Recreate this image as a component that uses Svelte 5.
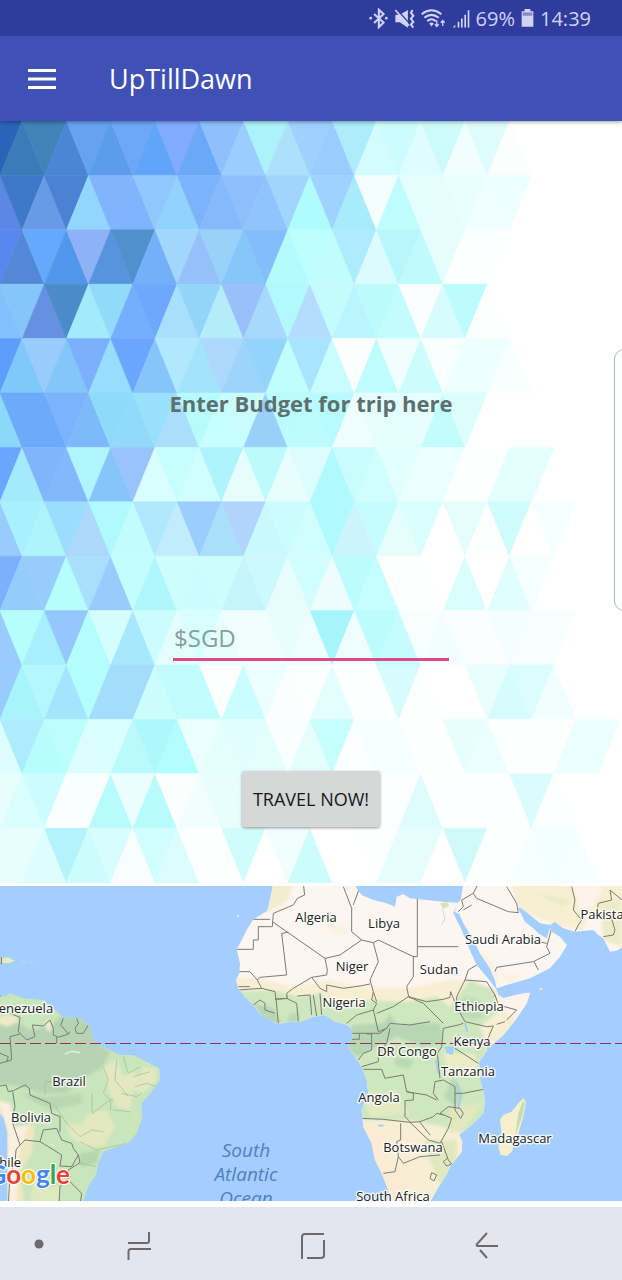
<script>
  let budget = $state('');

  // Triangle mosaic: each row lists fills from left to right, one per half base.
  const HALF = 22.15;
  const ROW = 54.4;
  const mosaic = [
    '2a64b8 3a7cba 3f83b8 4a86d4 66a2f0 5c9cec 6ea6f8 62a4f9 82aafd 6aa8f8 8ec0fd 9acefd acf2fc ace0fb 9fd0fe 98cdfd acecfb d2fcfe ccfcfe dffdfe cdfbfc f0fefe dffcfd fcfefe',
    '5a88e2 3f78c8 689be6 4b82d6 92d6fe 82b4fc 80b4fd 90c8fb 92d2fe 7cb4fb 86b8fc 8ebefc 90c4fc a0d6fc aefcfe 9fd2ff a8ecfc f4fefe bffcfe e4fdfe e6fdfe e9fefe f0ffff edffff',
    '5688f0 5288d6 66a8fc 5298ea 8eb2f6 5894de 5090cc 74b0fa a2d6fb 96c0fa 98d2fb 86c6fa 84befa b4fbfd bdfefe c2fdfe acecfc dcfbfc b8f6fc bffafc e6fdfe fdfefe fbffff',
    '82c0fc 84c6fc 6890e2 4a8cca a2eafc 92dafa 74aefc 6ea8fc a8e0fb 94d4f8 b4ecfb 98c0fa a8d8fc b2f8fd b4dcfc c6fbfe baf4fc bcfbfd c4fbfd fafefe d6fcfd bdfcfd fdffff',
    '5e9efa 80c8fb 98ccfc 84c6fa 7ab0fc 96defb 6aa6fb 86c4fb b0e8fd a4e4fb acd8fb 9cd4fc 94d4fc c0fdfd a8e4fc c9fdfd fcfefe bffcfe f0fefe cbfdfd f7ffff edffff edffff f8ffff',
    '8cd8fb 6caafa 6caafb 7cb4fb 7ebafb 8edafb 92dafc 98e0fb aadefa b8fbfd c8fdfd cafcfe 98d0fa bcfbfd bdfcfe b8fbfe effefe e6fdfe e4fdfe e6fefe c2fcfd ddfdfd',
    '6aa6fb a2eafc 80b4fb 82b8fc b0f4fc 88c4fc 98c4fb d8feff c6fdfe d0fefe aff4fc e6fdfe bdfafd e8fdfe dcfdfe b0fafe c8fcfd d0fdfe e2fefe ecffff ebffff fdffff fdffff e4fdfd e4fdfe',
    '98ccfc a8f0fd aef4fd 9cdcfc acd8fc aefafe c2fdfe b0e8fc c2ecfc 9acefc a8e0fc b0d4fc c8fafd ccfdfe d2fdfe aefafe ccf4fd c6fcfe e6fdfe dafdfd ffffff e6fdfd fdffff d0fcfd ffffff f6ffff',
    '7cb0fc 94ccfc 98ccfc b6fdfe a8e0fc 98ccfc c4fdfe b0f6fd ccfefe ccfdfe ccfefe c6f4fd ccf8fe e6fdfe d2fdfe edfdfe bdfcfe c6fdfe fdffff fdffff ffffff dafdfd ffffff e2fdfd f5ffff',
    '98ccfc b8fdfe a6f0fd 94c8fc b4fcfe d4fefe a8e8fd ccfdfe e4fefe d8fefe e8fefe f0fefe f0fefe e8fefe eefefe a8f4fc eefefe bcfcfe c6fcfe f8ffff f2fefe fafefe fafefe f4fefe f6fefe f8ffff',
    '98ccfe a8f4fd b4f8fe a4e4fc b4fdfe a4dcfd a4dcfc ccfdfd c2fbfe c2fdfe fdfefe cafdfe ecfefe fafefe fdfefe e4fdfe fdffff fcffff d6fcfd fdffff ffffff ffffff eafefe d6fdfd dcfdfd f0fefe',
    'dcfdfe acecfd b8fdfe bcfdfe dcfdfe d8fefe bafafc aef8fc b2fdfd ecfefe e4fefe e0fefe e4fefe f8ffff e4fdfd c8fdfd fcffff f6ffff f6ffff fdffff fdffff e8fefe ecfefe fdffff fdffff fdffff ecfefe ecfefe',
    'e8fefe dafdfe ccfcfe fafefe f8fefe b8fbfc ecfdfe b8fbfc fcfefe f0fefe e8fefe e8fefe e8fefe f0fefe f0fefe fafefe fcffff fcffff fcffff dffcfd fcffff fcffff fcffff fcffff dcfbfc fcffff',
    'e8fefe e6fefe dcfefe b4f2fc ccfdfd d8fdfd f8fefe d0fdfd dcfdfe fdffff fdffff d0fcfc ffffff f0fefe ccfcfc ffffff ffffff fdffff e6fdfd e6fdfd ffffff d0fafa fdffff fdffff f6ffff f2ffff f4ffff',
  ];
  const tiles = mosaic.flatMap((row, r) =>
    row.split(' ').map((c, i) => {
      const top = r * ROW;
      const bottom = top + ROW;
      const down = (i + r) % 2 === 0;
      const base = down ? top : bottom;
      const tip = down ? bottom : top;
      return {
        points: `${(i - 1) * HALF},${base} ${(i + 1) * HALF},${base} ${i * HALF},${tip}`,
        fill: '#' + c,
      };
    })
  );

  const places = [
    ['Algeria', 316, 36], ['Libya', 384, 42], ['Niger', 352, 85], ['Nigeria', 344, 121],
    ['Sudan', 439, 88], ['Ethiopia', 479, 125], ['Kenya', 472, 160], ['DR Congo', 407, 170],
    ['Tanzania', 468, 190], ['Angola', 379, 216], ['Botswana', 413, 266], ['Madagascar', 515, 257],
    ['South Africa', 393, 315], ['Saudi Arabia', 503, 58], ['Pakistan', 606, 33],
    ['Venezuela', 22, 127], ['Brazil', 69, 200], ['Bolivia', 31, 236], ['Chile', 6, 281],
  ];
  const ocean = [['South', 271], ['Atlantic', 295], ['Ocean', 319]];

  const africa = 'M190 10L180 60 172 92 130 118 110 150 95 180 80 208 90 250 88 280 78 300 85 325 105 350 130 375 150 402 180 420 205 432 240 425 270 425 310 410 345 405 375 425 405 432 425 445 428 470 413 500 435 530 455 560 470 600 475 640 455 690 460 740 485 790 495 840 515 880 535 930 540 975H655L680 930 712 880 720 860 755 815 757 785 747 765 785 735 820 700 824 670 822 640 810 600 812 570 805 550 835 505 880 465 920 415 950 370 960 338 930 342 880 355 865 345 858 327 830 290 800 255 775 200 755 150 730 100 742 68 700 65 650 60 600 55 580 42 560 50 555 80 530 70 490 60 455 45 440 25 430 10Z';
  const asia = 'M735 96L748 102 760 130 790 180 810 220 840 265 855 300 860 325 900 312 960 295 1020 265 1050 230 1071 195 1050 170 1025 155 1020 145 1010 175 985 160 970 145 945 125 930 95 922 82 935 85 960 105 990 130 1020 135 1035 125 1060 145 1095 155 1150 150 1165 165 1180 175 1200 215 1220 212 1240 200V10H760L752 60 738 72Z';
  const america = 'M-10 345L15 350 30 340 70 355 130 360 160 385 190 412 240 415 270 440 280 480 300 495 340 515 360 525 400 525 440 545 478 565 480 600 455 635 425 670 425 720 410 760 385 790 350 800 310 815 295 850 290 880 265 920 245 975H22V760L10 712-10 695Z';
</script>

<div class="screen">
  <header>
    <div class="status">
      <svg width="19" height="21" viewBox="33 22 56 62" aria-hidden="true">
        <path d="M48 40L76 65 62 79V27L76 40 48 66" fill="none" stroke="currentColor" stroke-width="6" />
        <circle cx="38" cy="52" r="4" fill="currentColor" /><circle cx="84" cy="52" r="4" fill="currentColor" />
      </svg>
      <svg width="21" height="21" viewBox="103 22 62 62" aria-hidden="true">
        <path d="M107 42H120L144 28V80L120 64H107Z" fill="currentColor" />
        <path d="M112 27L150 69" stroke="#2f3b9d" stroke-width="4" />
        <path d="M107 28L147 74" stroke="currentColor" stroke-width="5" />
        <path d="M158 28L153 36 160 45 153 54 160 63 153 71 160 80" fill="none" stroke="currentColor" stroke-width="6" />
      </svg>
      <svg width="25" height="21" viewBox="187 22 76 62" aria-hidden="true">
        <g fill="none" stroke="currentColor" stroke-width="6">
          <path d="M189 40Q219 16 249 40M197 51Q219 33 241 51M206 61Q219 50 232 61" />
          <path d="M235 58V76M229 70L235 77 241 70M253 76V60M247 66L253 59 259 66" stroke-width="4" />
        </g>
        <path d="M212 68Q219 62 226 68L219 77Z" fill="currentColor" />
      </svg>
      <svg width="18" height="21" viewBox="272 22 54 62" aria-hidden="true">
        <path d="M274 80L282 72V80ZM289 63H294V80H289ZM299 53H304V80H299ZM309 42H314V80H309ZM319 28H324V80H319Z" fill="currentColor" />
      </svg>
      <span>69%</span>
      <svg width="13" height="20" viewBox="482 24 40 60" aria-hidden="true">
        <path d="M493 26H511V33H520V81H484V33H493Z" fill="currentColor" />
        <path d="M487 37H517V47H487Z" fill="#8588c8" />
      </svg>
      <time>14:39</time>
    </div>
    <div class="toolbar">
      <button class="menu" aria-label="Open navigation">
        <svg width="28" height="20" viewBox="0 0 28 20" aria-hidden="true">
          <path d="M0 1.5H28M0 10H28M0 18.5H28" stroke="#fff" stroke-width="3" />
        </svg>
      </button>
      <h1>UpTillDawn</h1>
    </div>
  </header>

  <main>
    <svg class="mosaic" viewBox="0 0 622 765" preserveAspectRatio="xMidYMid slice" aria-hidden="true">
      {#each tiles as t}
        <polygon points={t.points} fill={t.fill} stroke={t.fill} stroke-width="0.6" />
      {/each}
    </svg>
    <label for="budget">Enter Budget for trip here</label>
    <input id="budget" type="text" inputmode="decimal" placeholder="$SGD" bind:value={budget} />
    <button class="travel">TRAVEL NOW!</button>
    <div class="edge"></div>
  </main>

  <section class="map" aria-label="Map">
    <svg viewBox="0 0 622 315" preserveAspectRatio="xMidYMid slice">
      <defs>
        <clipPath id="af"><path d={africa} /></clipPath>
        <clipPath id="as"><path d={asia} /></clipPath>
        <clipPath id="am"><path d={america} /></clipPath>
        <filter id="soft"><feGaussianBlur stdDeviation="5" /></filter>
      </defs>
      <rect width="622" height="315" fill="#a3ceff" />

      <g transform="translate(0 -6) scale(.33333)">
        <path d="M-5 235L25 232 45 243 25 250-5 248Z" fill="#e3ebc2" />
        <path d="M4 232V252" stroke="#666" stroke-width="3" />
        <path d="M65 245L80 248M92 248H97M113 252H118" stroke="#c7dbc9" stroke-width="4" />
        <path d={america} fill="#c9e5bb" />
        <g clip-path="url(#am)">
          <g filter="url(#soft)">
            <path d="M-10 430L50 425 90 450 150 440 190 400 240 415 275 440 300 495 330 515 310 560 260 590 200 640 130 640 60 620-10 610Z" fill="#b7d4b2" />
            <path d="M60 640L150 650 240 640 250 670 160 690 90 660Z" fill="#b9d8b2" />
            <path d="M0 410L45 405 55 425 20 440-5 430ZM135 420L155 425 155 455 140 450Z" fill="#efebc8" />
            <path d="M-10 660L30 670 45 740 90 735 100 790 70 830 55 980H20L22 750Z" fill="#fbefe0" />
            <path d="M85 730L105 740 95 820 60 880 75 980H50L50 850Z" fill="#eee8c2" />
            <path d="M200 730L240 735 270 700 320 690 345 740 310 800 260 800 210 770Z" fill="#e4e8be" />
            <path d="M310 560L350 540 370 590 410 560 470 565 470 600 430 640 400 630 390 690 350 680 330 640Z" fill="#e3e8c0" />
            <path d="M390 540L430 560 420 590 395 575ZM400 690L420 690 405 760 385 760Z" fill="#cde6b9" />
            <path d="M240 820L300 810 290 850 240 860Z" fill="#b4d7ad" />
            <path d="M100 900L180 920 175 970 90 970Z" fill="#dfe9bd" />
          </g>
          <path d="M195 522L215 514 240 518M150 790L165 800" stroke="#d9eee4" stroke-width="5" fill="none" />
          <path class="states" d="M135 645V605H160M310 560L325 600 310 640 332 660V690M275 640L277 700 330 660H340M350 540L345 600 385 650M370 530L385 580 420 560M405 620L440 610 470 620M340 690L390 695M160 670L200 730 240 770 275 750 310 755M240 785L290 810 380 790M240 850L290 860M400 590L450 575M365 640L410 650 425 640" />
          <path class="border" d="M0 350L15 338M30 400L60 412 55 455 80 480 105 470 97 435 130 438 150 420 160 445 160 465 175 472 205 462 210 455M190 415L182 435 205 462M230 415L235 430 225 445 230 460H250L265 435M60 462L30 470 35 540 0 550M170 472V490M0 520L25 530 20 545M0 618L18 615 25 635 40 632 75 615 88 625 90 645 150 670 155 700 180 710 180 755M38 635L45 680 35 720 60 795 75 780 120 785 130 750 170 745 185 780 215 790 220 805 235 825 215 860 180 858 185 825 145 800 120 785M60 795L48 810 45 850 30 880 25 975M235 825L240 848 205 870 210 890 180 920 177 975M210 905L245 940 240 975" />
        </g>
      </g>

      <g transform="translate(210 -6) scale(.33333)">
        <path d={africa} fill="#fdf5f0" />
        <path d={asia} fill="#fdf5f0" />
        <g clip-path="url(#af)">
          <g filter="url(#soft)">
            <path d="M190 10H250L235 60 190 90 165 95Z" fill="#f3edcf" />
            <path d="M50 290L140 295 250 320 350 300 450 320 590 325 720 300 770 300 870 330 990 330V460L820 560V1000H400V690L50 400Z" fill="#f8eed4" />
            <path d="M70 335L190 330 270 350 330 340 400 385 470 360 590 365 680 350 720 380 780 300 850 330 860 400 810 440 830 500 830 720 760 760 700 740 600 720 450 720 400 500 50 460Z" fill="#cee7bf" />
            <path d="M130 370L190 385 215 430 170 430ZM425 435L520 430 540 400 560 435 620 430 690 430 700 490 640 500 560 470 440 530 410 500Z" fill="#b7d6b2" />
            <path d="M550 530L610 540 600 565 560 560ZM240 400L270 400 260 430 230 430ZM730 590L760 640 740 680 700 650Z" fill="#b9d9b3" />
            <path d="M760 350L810 360 820 410 790 420 740 400Z" fill="#bbdcb4" />
            <path d="M700 520L790 520 810 570 720 590Z" fill="#eeecc6" />
            <path d="M460 640L560 640 600 700 480 710Z" fill="#e5e9c1" />
            <path d="M865 350L970 330 930 420 890 400Z" fill="#fdf3ec" />
            <path d="M450 730L530 760 550 880 600 870 610 930 560 980 460 940Z" fill="#fbebd4" />
            <path d="M720 680L820 670 760 750 720 760ZM640 780L740 780 740 880 690 920 660 840Z" fill="#e2e8be" />
            <path d="M345 140L390 135 420 150 390 165Z" fill="#f9f2e0" />
          </g>
          <path d="M690 70L710 66 718 78 700 86Z" fill="#d5e4b4" />
          <path d="M740 610L752 650 745 685M678 540L685 580M765 430L772 455M505 737H520" stroke="#9ccafb" stroke-width="5" fill="none" />
          <path d="M697 85L705 115 695 135" stroke="#bcdcf8" stroke-width="3" fill="none" />
          <path d="M705 500H732L728 525 710 520Z" fill="#a3ceff" />
          <path class="border" d="M280 10L284 45 262 55 250 75 190 100 187 140H145V180H130V208H80M187 125L345 235 390 225 455 180 425 155V85L400 20M130 118H180M235 157L215 160 230 285 150 292 142 300M345 235L352 270 350 285 305 292 330 325M305 292L250 325 230 340 232 355 195 358M455 180L490 188 505 180 610 230V290L590 320 595 345 600 355M622 55V230H610M622 200H745M450 20L430 75M490 188L505 245 480 300 490 335 485 360M330 325L350 335V315L400 325 450 318 480 312M85 275L120 275 142 300 155 325 195 335 200 375 205 430M85 320H120M85 330L155 325M130 375L150 360 165 370 165 390 195 400M195 358L230 355 260 370 265 425M262 348L300 345 305 405M310 345L320 408M330 340L335 405M485 360L500 370 490 390 440 405 410 430M490 335L500 365M490 390L505 455 530 445 540 430 600 435 660 425M500 400L550 380 595 350 640 370 700 430M595 350L650 365 700 358 720 352 722 335 728 350 740 380 765 425M425 460H510L530 445M425 478H448V462M470 462H485V510L460 520 445 540M540 445L530 490 505 520 505 545 455 560M460 568H515L525 595 580 585 590 635 610 640V660L585 662V710L600 725M455 715L520 718 600 727 630 725 670 710 680 700 700 705M590 635L650 645 680 660M600 727L655 780 690 790M572 730V780L560 785 565 830 555 875 520 880M565 830L580 850 630 830 690 825M630 727L660 765M690 790L715 745 725 715 690 700 715 680 750 685 760 700 752 715 735 690 735 620 700 600 675 605 670 640 685 660M690 595L682 520 695 500 700 445 745 435 760 430M735 640H760L820 628M735 505L805 550M765 425L830 440 850 438 832 480 835 510M740 380L740 350 765 300 775 270 800 255M765 300L830 305 855 345 850 350M855 345L865 375 920 390 890 420M885 425L860 433M695 785L715 840 725 852 710 858 700 845 712 835M660 895L665 878 680 885 672 903Z" />
        </g>
        <g clip-path="url(#as)">
          <g filter="url(#soft)">
            <path d="M900 10H1236V80L1200 100 1130 110 1120 150 1060 140 1000 120 930 90Z" fill="#f6efd2" />
            <path d="M1090 20H1180L1150 80 1110 100Z" fill="#fdf3ea" />
            <path d="M1170 60H1236V200L1180 180Z" fill="#eeecc8" />
            <path d="M780 180L850 250 870 320 820 260ZM870 280L940 290 900 312Z" fill="#fbf1df" />
            <path d="M980 40L1080 60 1060 80Z" fill="#e9eac6" />
          </g>
          <path class="border" d="M755 60L790 40 805 10M790 40L800 55 895 95 925 98 920 70 890 20M745 95L760 80 755 60M760 90L785 75M1085 20L1095 60 1090 90 1115 120 1105 135 1095 155M1236 60L1200 30 1205 60 1165 70 1160 100M1200 100L1215 150 1210 165 1180 170M1025 145L1010 200 1020 220 970 245 860 262 855 275M972 245L985 270M1010 190L985 185" />
        </g>
        <path d="M940 655L948 665 940 710 925 760 905 815 890 828 872 825 865 800 875 760 870 720 880 705 905 695 925 670Z" fill="#f5efcd" />
        <path d="M940 660L945 670 935 715 915 770 925 700Z" fill="#c4e0b0" />
        <path d="M988 327H998" stroke="#e8ecd0" stroke-width="5" /><circle cx="84" cy="108" r="3" fill="#f2f2e0" />
      </g>

      <path d="M0 157.500H622" stroke="#93305f" stroke-width="1" stroke-dasharray="11 4" />

      <g class="places">
        {#each places as [name, x, y]}<text {x} {y}>{name}</text>{/each}
      </g>
      <g class="ocean">
        {#each ocean as [name, y]}<text x="246" {y}>{name}</text>{/each}
      </g>
      <text class="brand" x="70" y="298"><tspan fill="#4285f4">G</tspan><tspan fill="#ea4335">o</tspan><tspan fill="#fbbc05">o</tspan><tspan fill="#4285f4">g</tspan><tspan fill="#34a853">l</tspan><tspan fill="#ea4335">e</tspan></text>
    </svg>
  </section>

  <nav>
    <button class="dot" aria-label="Show and hide button"><svg width="10" height="10" viewBox="0 0 10 10"><circle cx="5" cy="5" r="4.500" fill="#6b6b6e" /></svg></button>
    <button aria-label="Recents">
      <svg width="24" height="28" viewBox="0 0 24 28"><path d="M1 11H20Q22 11 22 8.500V0M24 17H4Q1.500 17 1.500 19.500V28" /></svg>
    </button>
    <button aria-label="Home">
      <svg width="26" height="28" viewBox="0 0 24 28"><path d="M23 2H4Q1 2 1 5V27M23 8V23Q23 26 20 26H6" /></svg>
    </button>
    <button aria-label="Back">
      <svg width="24" height="28" viewBox="0 0 24 28"><path d="M12 1L2 12Q1 14 3 14H23M5 18L12 26" /></svg>
    </button>
  </nav>
</div>

<style>
  :global(body) { margin: 0; }
  .screen {
    display: flex;
    flex-direction: column;
    min-height: 100vh;
    background: #fff;
    font-family: "Open Sans", "Noto Sans", sans-serif;
  }
  button { border: 0; padding: 0; background: none; font: inherit; cursor: pointer; }
  header { position: relative; z-index: 1; background: #3f51b5; box-shadow: 0 1px 4px rgba(0, 0, 0, 0.4); }
  .status {
    display: flex;
    align-items: center;
    justify-content: flex-end;
    gap: 6px;
    height: 36px;
    padding-right: 31px;
    background: #2f3b9d;
    color: #d0d3f2;
    font-size: 20px;
  }
  .toolbar { display: flex; align-items: center; gap: 53px; height: 85px; padding-left: 28px; }
  .menu { display: flex; }
  h1 { margin: 0; color: #fff; font-size: 27px; font-weight: 500; line-height: 32px; }
  main {
    position: relative;
    display: flex;
    flex-direction: column;
    align-items: center;
    padding: 266px 24px 59px;
    overflow: hidden;
  }
  .mosaic { position: absolute; inset: 0; width: 100%; height: 100%; }
  label { position: relative; color: #5c706f; font-size: 22px; font-weight: 700; line-height: 32px; }
  input {
    position: relative;
    box-sizing: border-box;
    width: 276px;
    max-width: 100%;
    height: 44px;
    margin-top: 198px;
    padding: 0 1px;
    border: 0;
    border-bottom: 3px solid #e04886;
    border-radius: 0;
    outline: 0;
    background: none;
    color: #333;
    font: 24px "Open Sans", "Noto Sans", sans-serif;
  }
  input::placeholder { color: #84a0a2; opacity: 1; }
  .travel {
    position: relative;
    min-width: 138px;
    height: 56px;
    margin-top: 110px;
    padding: 0 10px;
    border-radius: 3px;
    background: #d6d8d8;
    box-shadow: 0 1px 3px rgba(0, 0, 0, 0.4);
    color: #151818;
    font-size: 18px;
  }
  .edge {
    position: absolute;
    top: 228px;
    right: -12px;
    width: 18px;
    height: 260px;
    border: 1px solid #b4b6b6;
    border-radius: 10px;
    background: #fdfefe;
  }
  .map svg { display: block; width: 100%; }
  .border { fill: none; stroke: #777c73; stroke-width: 3; stroke-linejoin: round; }
  .states { fill: none; stroke: #a5b79c; stroke-width: 2; }
  .places, .ocean { text-anchor: middle; paint-order: stroke; stroke-linejoin: round; }
  .places { font-size: 13px; fill: #222; stroke: rgba(255, 255, 255, 0.8); stroke-width: 3px; }
  .ocean { font-size: 19px; font-style: italic; fill: #527fbd; }
  .brand {
    font-family: Lato, sans-serif;
    font-size: 26px;
    font-weight: 700;
    text-anchor: end;
    paint-order: stroke;
    stroke: #fff;
    stroke-width: 2px;
  }
  nav {
    display: grid;
    grid-template-columns: 52px repeat(3, 28%) 1fr;
    flex: 1;
    min-height: 73px;
    margin-top: 6px;
    background: #e4e5ef;
  }
  nav button { display: flex; align-items: center; justify-content: center; padding-top: 4px; }
  nav .dot { justify-content: flex-end; padding: 0 8px 0 0; }
  nav path { fill: none; stroke: #6b6b6e; stroke-width: 2; }
</style>
